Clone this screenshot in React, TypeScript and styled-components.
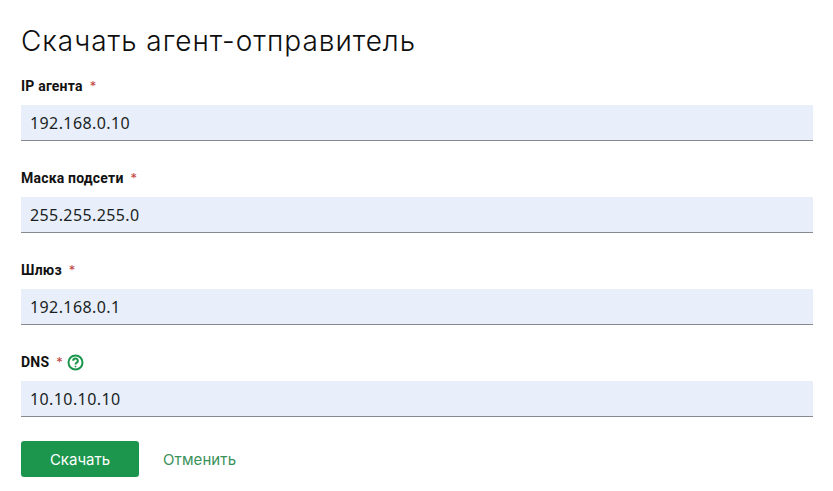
import styled, { createGlobalStyle } from "styled-components";

const GlobalStyle = createGlobalStyle`
  html, body {
    margin: 0;
    background: #fff;
    font-family: "Inter", sans-serif;
  }
`;

const Page = styled.form`
  width: 833px;
  height: 491px;
  box-sizing: border-box;
  padding: 22px 20px 0 21px;
  display: flex;
  flex-direction: column;
`;

const Title = styled.h1`
  margin: 0 0 16px;
  height: 38px;
  font-family: "Inter", sans-serif;
  font-size: 28px;
  line-height: 38px;
  font-weight: 300;
  letter-spacing: 0.97px;
  color: #0d0d0d;
`;

const FieldList = styled.div`
  display: flex;
  flex-direction: column;
  gap: 27px;
`;

const Field = styled.div`
  display: flex;
  flex-direction: column;
`;

const LabelRow = styled.div`
  height: 20px;
  margin-bottom: 9px;
  display: flex;
  align-items: center;
`;

const LabelText = styled.label`
  font-family: Roboto, sans-serif;
  font-size: 14px;
  font-weight: 700;
  letter-spacing: 0.2px;
  color: #111;
`;

const Required = styled.span`
  margin-left: 7px;
  font-size: 13px;
  color: #c0453f;
`;

const HelpIcon = styled.svg`
  margin-left: 4px;
  width: 17px;
  height: 17px;
`;

const Input = styled.input`
  box-sizing: border-box;
  height: 36px;
  padding: 0 9px;
  border: 0;
  border-bottom: 1px solid #858a91;
  outline: none;
  background: #e8effb;
  font-family: "Noto Sans", sans-serif;
  font-size: 16px;
  letter-spacing: 0.4px;
  color: #1b1f23;
`;

const Actions = styled.div`
  margin-top: 24px;
  display: flex;
  align-items: center;
  gap: 24px;
`;

const Submit = styled.button`
  width: 118px;
  height: 36px;
  border: 0;
  border-radius: 3px;
  background: #1b964c;
  color: #fff;
  font-family: "Inter", sans-serif;
  font-size: 15px;
`;

const Cancel = styled.button`
  padding: 0;
  border: 0;
  background: none;
  color: #3a9159;
  font-family: "Inter", sans-serif;
  font-size: 15px;
  letter-spacing: 0.1px;
`;

const fields = [
  { label: "IP агента", value: "192.168.0.10" },
  { label: "Маска подсети", value: "255.255.255.0" },
  { label: "Шлюз", value: "192.168.0.1" },
  { label: "DNS", value: "10.10.10.10", help: true },
];

export default function App() {
  return (
    <>
      <GlobalStyle />
      <Page>
        <Title>Скачать агент-отправитель</Title>
        <FieldList>
          {fields.map((f) => (
            <Field key={f.label}>
              <LabelRow>
                <LabelText>{f.label}</LabelText>
                <Required>*</Required>
                {f.help && (
                  <HelpIcon viewBox="0 0 17 17" fill="none" stroke="#1b964c" strokeWidth="2">
                    <circle cx="8.5" cy="8.5" r="7" />
                    <path d="M6.2 6.8a2.3 2.3 0 1 1 3.5 1.9c-.8.5-1.2.9-1.2 1.7" />
                    <circle cx="8.5" cy="12.5" r="0.5" fill="#1b964c" strokeWidth="1" />
                  </HelpIcon>
                )}
              </LabelRow>
              <Input defaultValue={f.value} />
            </Field>
          ))}
        </FieldList>
        <Actions>
          <Submit type="button">Скачать</Submit>
          <Cancel type="button">Отменить</Cancel>
        </Actions>
      </Page>
    </>
  );
}
